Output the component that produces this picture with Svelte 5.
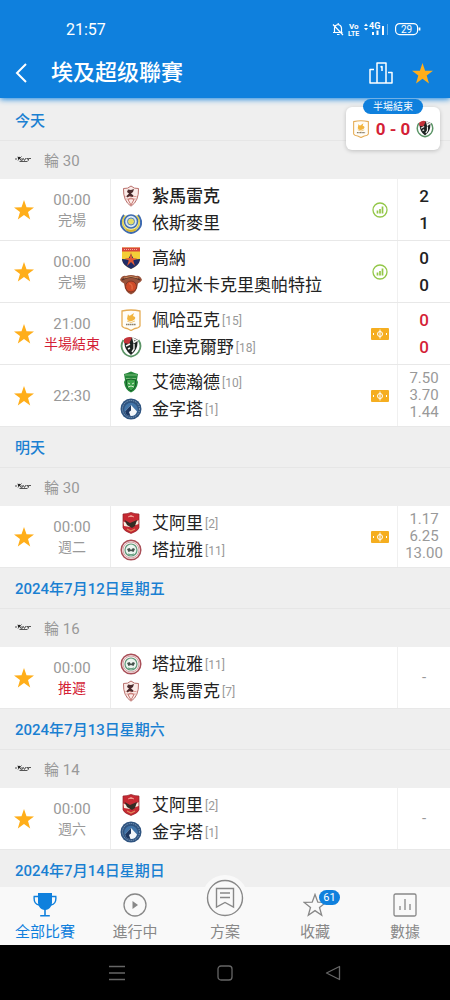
<script>
  const sections = [
    {
      date: '今天',
      round: '輪 30',
      matches: [
        { time: '00:00', status: '完場', icon: 'stats', score: ['2', '1'],
          teams: [{ name: '紮馬雷克', crest: 'zamalek', win: true }, { name: '依斯麥里', crest: 'ismaily' }] },
        { time: '00:00', status: '完場', icon: 'stats', score: ['0', '0'],
          teams: [{ name: '高納', crest: 'gouna' }, { name: '切拉米卡克里奧帕特拉', crest: 'ceramica' }] },
        { time: '21:00', status: '半場結束', alert: true, live: true, icon: 'odds', score: ['0', '0'],
          teams: [{ name: '佩哈亞克', crest: 'pharco', rank: 15 }, { name: 'El達克爾野', crest: 'dakhleya', rank: 18 }] },
        { time: '22:30', icon: 'odds', odds: ['7.50', '3.70', '1.44'],
          teams: [{ name: '艾德瀚德', crest: 'ittihad', rank: 10 }, { name: '金字塔', crest: 'pyramids', rank: 1 }] }
      ]
    },
    {
      date: '明天',
      round: '輪 30',
      matches: [
        { time: '00:00', status: '週二', icon: 'odds', odds: ['1.17', '6.25', '13.00'],
          teams: [{ name: '艾阿里', crest: 'ahly', rank: 2 }, { name: '塔拉雅', crest: 'talaea', rank: 11 }] }
      ]
    },
    {
      date: '2024年7月12日星期五',
      round: '輪 16',
      matches: [
        { time: '00:00', status: '推遲', alert: true,
          teams: [{ name: '塔拉雅', crest: 'talaea', rank: 11 }, { name: '紮馬雷克', crest: 'zamalek', rank: 7 }] }
      ]
    },
    {
      date: '2024年7月13日星期六',
      round: '輪 14',
      matches: [
        { time: '00:00', status: '週六',
          teams: [{ name: '艾阿里', crest: 'ahly', rank: 2 }, { name: '金字塔', crest: 'pyramids', rank: 1 }] }
      ]
    },
    { date: '2024年7月14日星期日', matches: [] }
  ];

  const tabs = [
    { id: 'all', label: '全部比賽' },
    { id: 'live', label: '進行中' },
    { id: 'plan', label: '方案' },
    { id: 'fav', label: '收藏', badge: 61 },
    { id: 'data', label: '數據' }
  ];

  let active = $state('all');
</script>

{#snippet star(size)}
  <svg class="star" width={size} height={size} viewBox="0 0 20 20"><path d="M10 0l2.5 7.3 7.5.1-6 4.6 2.2 7.5-6.2-4.4-6.2 4.4L6 12 0 7.4l7.5-.1z" /></svg>
{/snippet}

{#snippet crest(id, size)}
  <svg width={size} height={size} viewBox="0 0 22 22">
    {#if id === 'zamalek'}
      <path d="M3.5 3.500Q8 4 11 1q3 3 7.500 2.500Q19 16 11 21.200 3 16 3.500 3.500z" fill="#fbebe8" stroke="#b9706c" />
      <path d="M5.500 11.500h11M6.200 14h9.600" stroke="#dda09a" stroke-width="1.200" />
      <path d="M8 4.500l3 .5 3-1-1 3-2 1.500 2.500 2-1 1.500-3-1-2 1.500L6.500 11 9 8.500 7 7z" fill="#4b2b2c" />
      <path d="M8 14.500l3-1.500 3 1.500-3 5.500z" fill="none" stroke="#c5746e" />
    {:else if id === 'ismaily'}
      <path d="M4 3Q-1 9 2 15q3 5 9 6 6-1 9-6 3-6-2-12" fill="#f4efb5" stroke="#3f6bb0" stroke-width="2" />
      <path d="M5 4Q1 9 4 14.500q2 3.500 7 4 5-.5 7-4Q21 9 17 4" fill="none" stroke="#e0cf4c" stroke-width="1.500" />
      <circle cx="11" cy="9.500" r="6.500" fill="#d9e8f3" stroke="#3f6bb0" stroke-width="1.500" />
      <circle cx="11" cy="9.500" r="3.500" fill="#e6dc66" stroke="#5684bd" />
      <path d="M6 17.500q5 3 10 0" fill="none" stroke="#d7b530" stroke-width="1.800" />
    {:else if id === 'gouna'}
      <path d="M2 .5h18v12q-1 6-9 9.500-8-3.500-9-9.500z" fill="#f4ce38" />
      <path d="M2 .5h18v4H2z" fill="#d9463b" />
      <path d="M4 2.500h14" stroke="#f3b29f" stroke-width="1" stroke-dasharray="1 1" />
      <path d="M2 12l6 .5L11 7l3 5.500 6-.5v1q-1 5.500-9 9-8-3.500-9-9z" fill="#202c66" />
      <path d="M11 5l1.200 6 5 .5-4 2 1.800 5.500-4-4-4 4 1.800-5.500-4-2 5-.5z" fill="#e25a35" />
    {:else if id === 'ceramica'}
      <path d="M0 6q2-5 6-4 5-2 10 0 4-1 6 4-2 3-4 3.500-1 9-7 11-6-2-7-11Q2 9 0 6z" fill="#98523a" />
      <path d="M2 6q9-6 18 0" fill="none" stroke="#54342b" stroke-width="1.500" />
      <path d="M4 4q7-3 14 0" fill="none" stroke="#d0895a" />
      <circle cx="11" cy="12.500" r="5.500" fill="#cf4a28" stroke="#7d3526" />
      <path d="M9 9.500q4 .5 3 6" fill="none" stroke="#e2683f" stroke-width="1.500" />
    {:else if id === 'pharco'}
      <path d="M2 2q9-2 18 0v15q-1 2-5 2.500l-4 2-4-2Q3 19 2 17z" fill="#fffdf8" stroke="#e5ac55" stroke-width="1.300" />
      <path d="M8 5q1 3 3 1l3-2-1 3q4 1 1 4-5 3-7-1z" fill="#f2b53f" />
      <path d="M7 12q4 3 8 0" fill="none" stroke="#efc77d" />
      <path d="M6 15.500h10" stroke="#8b806b" stroke-width="1.500" stroke-dasharray="1.500 .4" />
    {:else if id === 'dakhleya'}
      <path d="M3.500 4q-4 6 0 12 3 4 7.500 4.500 4.500-.5 7.500-4.500 4-6 0-12" fill="none" stroke="#5b9466" stroke-width="1.800" />
      <path d="M4.500 3.500q6.500-4 13 0 1 10-6.500 15.500Q3.500 13.500 4.500 3.500z" fill="#1d2321" />
      <path d="M4 3q4-3 8-1.500L9 8 4 7z" fill="#c33339" />
      <path d="M13 2.500l4 2-3 2zM6 10l4-2M14 8v5l-2 3M8 13l2-1" fill="none" stroke="#f4f4f0" stroke-width="1.400" />
    {:else if id === 'ittihad'}
      <path d="M4 3q3-1 7-2.500Q15 2 18 3l-1 6 1 2q-1 8-7 10.500Q5 19 4 11l1-2z" fill="#26883b" />
      <path d="M5 4h12M6 7.500h10" stroke="#78bb78" />
      <path d="M6.500 9q4.500-2 9 0v5q-1 4-4.500 6-3.500-2-4.500-6z" fill="#3ca44b" stroke="#165f2a" />
      <path d="M8 12l2 1m4-1l-2 1M8 16q3-2 6 0" fill="none" stroke="#d7efcf" />
    {:else if id === 'pyramids'}
      <circle cx="11" cy="11" r="10.500" fill="#2f5480" />
      <circle cx="11" cy="11" r="8.500" fill="none" stroke="#8fa9c4" stroke-dasharray="1 1" />
      <circle cx="11" cy="11.500" r="6.800" fill="#4174a8" />
      <path d="M5 13.500L11 7l6 6.500q-1.500 4.500-6 4.500t-6-4.500z" fill="#f3f7fa" />
      <path d="M5 13.500L11 7v5.500L9 14l1.500 4Q6 18 5 13.500z" fill="#1d3760" />
    {:else if id === 'ahly'}
      <path d="M3 2q4 0 8-1.500Q15 2 19 2v14q-1 3-8 5.500Q4 19 3 16z" fill="#c62932" stroke="#922127" stroke-width=".7" />
      <path d="M8 5q3-3 6 0M9 4.500h4" fill="none" stroke="#ed9a8e" />
      <path d="M3.500 9.500L9 12l1 3-6-1zM18.500 8L14 11l-1 3 5.500-2z" fill="#f8eee1" />
      <path d="M4.500 8l5.500 3 7-3-2 6-3 2-5-3z" fill="#342c24" />
      <path d="M7 17l4 2 4-2" fill="none" stroke="#e08a5d" stroke-width="1.200" />
    {:else if id === 'talaea'}
      <circle cx="11" cy="11" r="9.800" fill="#f9efee" stroke="#a94f58" stroke-width="1.500" />
      <circle cx="11" cy="11" r="8" fill="none" stroke="#d3a5a8" />
      <circle cx="11" cy="11" r="6" fill="#edf5f0" stroke="#5d9a7a" stroke-width="1.200" />
      <path d="M7 10l2.500-1L11 11l2-2 2 1-1.500 3-2.500-1-2.500 1z" fill="#45524c" />
      <path d="M8 15q3 1.500 6 0" fill="none" stroke="#5d9a7a" />
    {/if}
  </svg>
{/snippet}

<div class="app">
  <header>
    <div class="status">
      <span class="clock">21:57</span>
      <svg width="92" height="16" viewBox="0 0 92 16" fill="none" stroke="#fff" stroke-width="1.200">
        <path d="M2 11.500h9.500M3.500 11V7q.3-3 3.500-3.500 3.200.5 3.500 3.500v4M6 13.500h2.500M2 3.500l10 10.500M7.200 2v1.500" />
        <g fill="#fff" stroke="none" font-family="Roboto, sans-serif" font-weight="700">
          <text x="18" y="8" font-size="8">Vo</text>
          <text x="17" y="15" font-size="7">LTE</text>
          <text x="38" y="8" font-size="9">4G</text>
          <path d="M33 5l2-2.500L37 5zM33 7l2 2.500L37 7zM41 11h2v3h-2zM45.500 9.500h2V14h-2zM51 5h2v9h-2z" />
          <path d="M56 3h1v11h-1z" opacity=".35" />
        </g>
        <rect x="64.600" y="2.600" width="22" height="11" rx="4" />
        <path d="M88.500 6.500v3" stroke-width="1.800" />
        <text x="70" y="12" font-size="10" fill="#fff" stroke="none" font-family="Roboto, sans-serif">29</text>
      </svg>
    </div>
    <div class="bar">
      <button class="back" aria-label="返回">
        <svg width="12" height="20" viewBox="0 0 12 20" fill="none" stroke="#fff" stroke-width="2"><path d="M11 1L2 10l9 9" /></svg>
      </button>
      <h1>埃及超级聯賽</h1>
      <button aria-label="積分榜">
        <svg width="24" height="22" viewBox="0 0 24 22" fill="none" stroke="#fff" stroke-width="1.500"><path d="M8 21H1V7.500h4M8 21V1h9v20zM17 21h6V10.500h-4M11.500 5l1.500-.5V9" stroke-linejoin="round" /></svg>
      </button>
      <button aria-label="收藏聯賽">{@render star(21)}</button>
    </div>
  </header>

  <main>
    <button class="floating">
      <span class="pill">半場結束</span>
      {@render crest('pharco', 18)}
      <strong>0 - 0</strong>
      {@render crest('dakhleya', 18)}
    </button>

    {#each sections as section}
      <section>
        <h2>{section.date}</h2>
        {#if section.round}
          <h3>
            <svg width="16" height="8" viewBox="0 0 16 8" fill="none" stroke="#555" stroke-width="1"><path d="M0 4h2M2.500 2l2 1.500L6.500 1.500M3 5.500L4.500 3l2 3M7 3v2.500l1.500-2 1 2L11 3M11.500 3.500h1.500v2M13.500 5.500V3.500H16M4.500 6.500h8" /><circle cx="4" cy="3" r="1.200" fill="#222" stroke="none" /></svg>
            {section.round}
          </h3>
        {/if}
        {#each section.matches as match}
          <article class:live={match.live}>
            <button class="fav" aria-label="收藏">{@render star(20)}</button>
            <div class="time">
              <time>{match.time}</time>
              {#if match.status}
                <span class:alert={match.alert}>{match.status}</span>
              {/if}
            </div>
            <div class="teams">
              {#each match.teams as team}
                <div class="team" class:win={team.win}>
                  {@render crest(team.crest, 22)}
                  <span>{team.name}</span>
                  {#if team.rank}<small>[{team.rank}]</small>{/if}
                </div>
              {/each}
            </div>
            <div class="extra">
              {#if match.icon === 'stats'}
                <svg width="16" height="16" viewBox="0 0 16 16" fill="none" stroke="#93c748"><circle cx="8" cy="8" r="7" stroke-width="1.300" /><path d="M5.500 11.500v-3M8 11.500V7M10.500 11.500V4.500" stroke-width="1.700" /></svg>
              {:else if match.icon === 'odds'}
                <svg width="18" height="12" viewBox="0 0 18 12"><rect width="18" height="12" rx="1" fill="#f5ae20" /><g fill="none" stroke="#fff"><circle cx="9" cy="6" r="2.500" /><path d="M9 1.500v9" /><path d="M2.500 5v2M15.500 5v2" /></g></svg>
              {/if}
            </div>
            <div class="result">
              {#if match.score}
                {#each match.score as goals}<b>{goals}</b>{/each}
              {:else if match.odds}
                {#each match.odds as odd}<span>{odd}</span>{/each}
              {:else}
                <span>-</span>
              {/if}
            </div>
          </article>
        {/each}
      </section>
    {/each}
  </main>

  <nav class="tabs">
    {#each tabs as tab}
      <button class:active={active === tab.id} class:center={tab.id === 'plan'} onclick={() => (active = tab.id)}>
        <span class="icon">
          {#if tab.id === 'all'}
            <svg width="24" height="24" viewBox="0 0 24 24"><path d="M5 0h14v10q-1 6-6.200 7v5h4v1.500H7.200V22h4v-5Q6 16 5 10z" fill="currentColor" /><path d="M5 3.500H1.200q-.8 7.500 4.800 8.500M19 3.500h3.800q.8 7.500-4.800 8.500" fill="none" stroke="currentColor" stroke-width="1.400" /></svg>
          {:else if tab.id === 'live'}
            <svg width="24" height="24" viewBox="0 0 24 24"><circle cx="12" cy="12" r="11" fill="none" stroke="currentColor" stroke-width="1.300" /><path d="M9.500 8l5.500 4-5.500 4z" fill="currentColor" /></svg>
          {:else if tab.id === 'plan'}
            <svg width="38" height="38" viewBox="0 0 38 38" fill="none" stroke="currentColor" stroke-width="1.400"><circle cx="19" cy="19" r="17.500" /><path d="M10.500 9.500h17v18.500L19 23.500 10.500 28zM14 14h10M14 18.500h10" /></svg>
          {:else if tab.id === 'fav'}
            <svg width="24" height="24" viewBox="0 0 24 24"><path d="M12 1.500l2.800 7.700 8 .2-6.300 5 2.200 7.800L12 17.600l-6.700 4.600 2.200-7.800-6.300-5 8-.2z" fill="none" stroke="currentColor" stroke-width="1.300" /></svg>
          {:else}
            <svg width="24" height="24" viewBox="0 0 24 24" fill="none" stroke="currentColor" stroke-width="1.300"><rect x="1" y="1" width="22" height="22" rx="1.500" /><path d="M7 17v-4M12 17V6M17 17v-6" /></svg>
          {/if}
          {#if tab.badge}<span class="badge">{tab.badge}</span>{/if}
        </span>
        {tab.label}
      </button>
    {/each}
  </nav>

  <div class="system">
    <button aria-label="選單"><svg width="16" height="16" viewBox="0 0 16 16"><path d="M0 1.500h16M0 8h16M0 14.500h16" /></svg></button>
    <button aria-label="主頁"><svg width="16" height="16" viewBox="0 0 16 16"><rect x="1" y="1" width="14" height="14" rx="3" /></svg></button>
    <button aria-label="上一頁"><svg width="16" height="16" viewBox="0 0 16 16"><path d="M14.500 1.500v13L1.500 8z" stroke-linejoin="round" /></svg></button>
  </div>
</div>

<style>
  :global(body) {
    background: #efefef;
  }

  .app {
    display: flex;
    flex-direction: column;
    height: 100vh;
    font-family: Roboto, "Noto Sans CJK SC", sans-serif;
    color: #222;
  }

  button {
    display: flex;
    align-items: center;
    justify-content: center;
    padding: 0;
    border: 0;
    background: none;
    font: inherit;
    color: inherit;
    cursor: pointer;
  }

  svg {
    display: block;
    flex: none;
  }

  .star {
    fill: #ffae1a;
  }

  header {
    background: #0f80dd;
    color: #fff;
    box-shadow: 0 1px 6px #0f80dd;
  }

  .status {
    display: flex;
    align-items: center;
    justify-content: space-between;
    height: 48px;
    padding: 10px 27px 0 66px;
    box-sizing: border-box;
  }

  .clock {
    font-size: 16px;
  }

  .bar {
    display: flex;
    align-items: center;
    gap: 19px;
    height: 50px;
    padding: 0 17px 0 15px;
  }

  h1 {
    flex: 1;
    margin: 0 0 0 5px;
    font-size: 22px;
    font-weight: 500;
    line-height: 30px;
  }

  main {
    flex: 1;
    min-height: 0;
    padding-top: 2px;
    overflow-y: auto;
    scrollbar-width: none;
  }

  header, main {
    position: relative;
  }

  header {
    z-index: 1;
  }

  h2, h3 {
    display: flex;
    align-items: center;
    box-sizing: border-box;
    margin: 0;
    padding: 0 15px 2px;
    font-size: 15px;
  }

  h2 {
    height: 41px;
    border-bottom: 1px solid #e6e6e6;
    font-weight: 500;
    color: #1a80d2;
  }

  h3 {
    gap: 13px;
    height: 38px;
    font-weight: 400;
    color: #999;
  }

  article {
    display: grid;
    grid-template-columns: 34px 77px 1fr 36px 52px;
    box-sizing: border-box;
    height: 62px;
    border-bottom: 1px solid #e8e8e8;
    background: #fff;
  }

  .fav {
    justify-content: flex-start;
    padding-left: 14px;
  }

  .time, .result {
    display: flex;
    flex-direction: column;
    align-items: center;
    justify-content: center;
    color: #999;
  }

  .time {
    border-right: 1px solid #ececec;
    font-size: 15px;
    line-height: 20px;
  }

  .time span {
    font-size: 14px;
  }

  .time .alert {
    color: #d41f37;
  }

  .teams {
    display: flex;
    flex-direction: column;
    justify-content: center;
    padding-left: 9px;
  }

  .team {
    display: flex;
    align-items: center;
    height: 27px;
    font-size: 17px;
    line-height: 22px;
    white-space: nowrap;
  }

  .team span {
    margin-left: 10px;
  }

  .team small {
    padding: 2px 0 0 2px;
    font-size: 12px;
    color: #999;
  }

  .win span {
    font-weight: 500;
  }

  .extra {
    display: flex;
    align-items: center;
    justify-content: center;
    border-right: 1px solid #f0f0f0;
  }

  .result {
    font-size: 15px;
    line-height: 17px;
  }

  .result b {
    font-size: 17px;
    font-weight: 500;
    line-height: 27px;
    color: #222;
  }

  .live .result b {
    color: #d41f37;
  }

  .floating {
    position: absolute;
    top: 9px;
    right: 10px;
    gap: 6px;
    width: 94px;
    height: 43px;
    border-radius: 6px;
    background: #fff;
    box-shadow: 0 1px 4px rgba(0, 0, 0, .2);
  }

  .floating strong {
    font-size: 17px;
    font-weight: 700;
    color: #d41f37;
    white-space: nowrap;
  }

  .pill {
    position: absolute;
    top: -8px;
    left: 17px;
    width: 60px;
    border-radius: 8px;
    background: #0f80dd;
    font-size: 10px;
    line-height: 15px;
    color: #fff;
  }

  .tabs {
    position: relative;
    display: grid;
    grid-template-columns: repeat(5, 1fr);
    height: 58px;
    background: #f9f9f9;
  }

  .tabs button {
    flex-direction: column;
    justify-content: flex-end;
    gap: 4px;
    padding-bottom: 2px;
    font-size: 15px;
    line-height: 22px;
    color: #888;
  }

  .tabs .active {
    color: #0f80dd;
  }

  .icon {
    position: relative;
  }

  .center .icon {
    margin-top: -20px;
    padding: 4px;
    margin-bottom: -4px;
    border-radius: 50%;
    background: #f9f9f9;
  }

  .badge {
    position: absolute;
    top: -3px;
    left: 16px;
    width: 21px;
    border-radius: 8px;
    background: #0f80dd;
    font-size: 11px;
    line-height: 15px;
    color: #fff;
  }

  .system {
    display: flex;
    align-items: center;
    justify-content: center;
    gap: 92px;
    height: 55px;
    background: #000;
  }

  .system svg {
    fill: none;
    stroke: #666;
    stroke-width: 1.3;
  }
</style>
